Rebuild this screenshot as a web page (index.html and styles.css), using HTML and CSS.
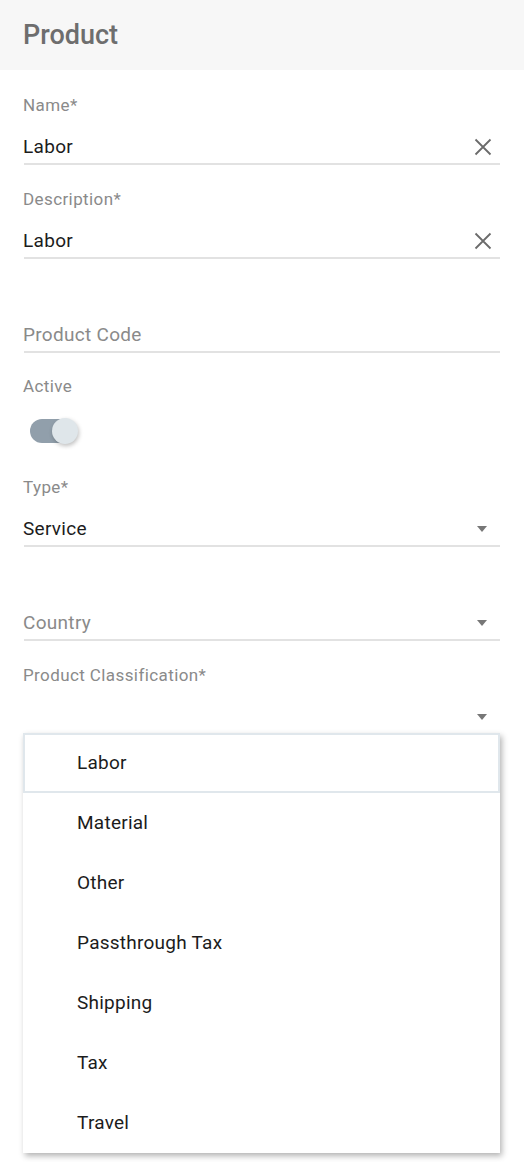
FILE: index.html
```html
<!doctype html>
<html lang="en">
<head>
    <meta charset="UTF-8">
    <meta name="viewport" content="width=device-width, initial-scale=1.0">
    <title>Product</title>
    <link rel="stylesheet" href="styles.css">
</head>
<body>

<div class="page">
    <div class="head">Product</div>

    <div class="form">
        <div class="field first">
            <div class="label">Name*</div>
            <div class="row">
                <span class="value">Labor</span>
                <svg class="clear" width="18" height="18" viewBox="0 0 18 18"><path d="M1.5 1.5 L16.5 16.5 M16.5 1.5 L1.5 16.5" stroke="#6b6b6b" stroke-width="1.8" fill="none"/></svg>
            </div>
        </div>

        <div class="field">
            <div class="label">Description*</div>
            <div class="row">
                <span class="value">Labor</span>
                <svg class="clear" width="18" height="18" viewBox="0 0 18 18"><path d="M1.5 1.5 L16.5 16.5 M16.5 1.5 L1.5 16.5" stroke="#6b6b6b" stroke-width="1.8" fill="none"/></svg>
            </div>
        </div>

        <div class="field">
            <div class="label"></div>
            <div class="row">
                <span class="hint">Product Code</span>
            </div>
        </div>

        <div class="switch-block">
            <div class="label">Active</div>
            <div class="switch">
                <span class="track"></span>
                <span class="knob"></span>
            </div>
        </div>

        <div class="field type">
            <div class="label">Type*</div>
            <div class="row">
                <span class="value">Service</span>
                <span class="caret"></span>
            </div>
        </div>

        <div class="field">
            <div class="label"></div>
            <div class="row">
                <span class="hint">Country</span>
                <span class="caret"></span>
            </div>
        </div>

        <div class="field open">
            <div class="label">Product Classification*</div>
            <div class="row">
                <span class="value"></span>
                <span class="caret"></span>
            </div>

            <ul class="menu">
                <li class="focus">Labor</li>
                <li>Material</li>
                <li>Other</li>
                <li>Passthrough Tax</li>
                <li>Shipping</li>
                <li>Tax</li>
                <li>Travel</li>
            </ul>
        </div>
    </div>
</div>

</body>
</html>
```

FILE: styles.css
```css
body{
    margin: 0;
    background-color: #fff;
    font-family: Roboto, "Liberation Sans", sans-serif;
}
ul{
    margin: 0;
    padding: 0;
    list-style: none;
}
.page{
    width: 524px;
    min-height: 1162px;
}
.head{
    height: 70px;
    display: flex;
    align-items: center;
    padding-left: 23px;
    background-color: #f7f7f7;
    color: #6e6e6e;
    font-size: 27px;
    font-weight: 500;
}
.form{
    padding: 0 24px 0 23px;
}
.field{
    margin-top: 22px;
    position: relative;
}
.field.first{
    margin-top: 23px;
}
.field.type{
    margin-top: 29px;
}
.label{
    height: 24px;
    line-height: 24px;
    font-size: 17px;
    letter-spacing: 0.4px;
    color: #8a8a8a;
}
.row{
    margin-top: 13px;
    height: 33px;
    display: flex;
    align-items: center;
    justify-content: space-between;
    border-bottom: 2px solid #e2e2e2;
    margin-left: 1px;
}
.value{
    font-size: 19px;
    letter-spacing: 0.3px;
    color: #1c1c1c;
    margin-left: -1px;
}
.hint{
    font-size: 19px;
    letter-spacing: 0.3px;
    color: #8a8a8a;
    margin-left: -1px;
}
.clear{
    margin-right: 8px;
}
.caret{
    width: 0;
    height: 0;
    border-left: 5px solid transparent;
    border-right: 5px solid transparent;
    border-top: 6px solid #777;
    margin-right: 13px;
}

.switch-block{
    margin-top: 21px;
}
.switch{
    position: relative;
    margin-top: 18px;
    margin-left: 7px;
    width: 50px;
    height: 30px;
}
.track{
    position: absolute;
    left: 0;
    top: 3px;
    width: 44px;
    height: 24px;
    border-radius: 12px;
    background-color: #919fab;
}
.knob{
    position: absolute;
    left: 22px;
    top: 2px;
    width: 26px;
    height: 26px;
    border-radius: 50%;
    background-color: #dfe6ea;
    box-shadow: 1px 2px 4px rgba(0,0,0,0.25);
}

.menu{
    position: absolute;
    top: calc(100% - 2px);
    left: 0;
    width: 477px;
    background-color: #fff;
    box-shadow: 2px 3px 6px rgba(0,0,0,0.3);
}
.menu li{
    height: 60px;
    line-height: 60px;
    padding-left: 54px;
    font-size: 19px;
    letter-spacing: 0.25px;
    color: #1c1c1c;
}
.menu li.focus{
    height: 56px;
    line-height: 56px;
    padding-left: 52px;
    border: 2px solid #e0e7ec;
}
```
